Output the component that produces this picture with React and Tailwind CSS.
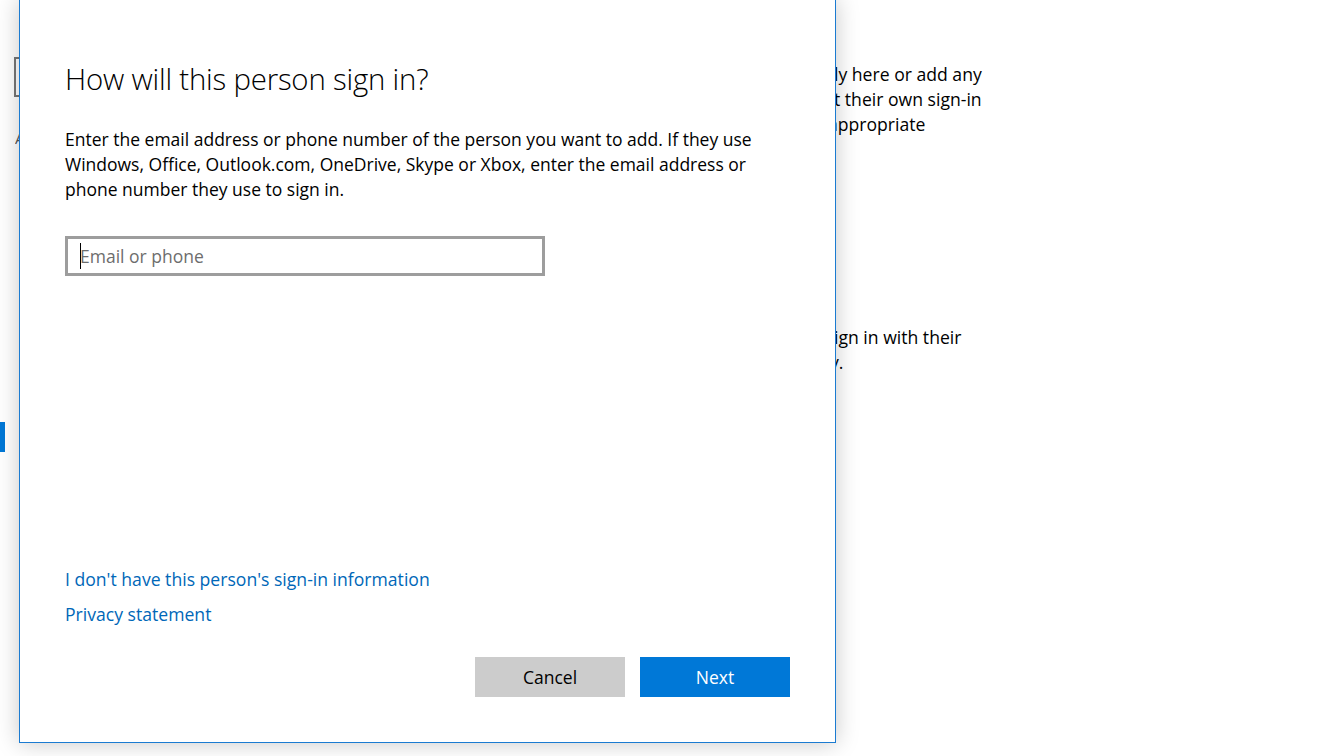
import React from "react";

const bodyLines = [
  "Enter the email address or phone number of the person you want to add. If they use",
  "Windows, Office, Outlook.com, OneDrive, Skype or Xbox, enter the email address or",
  "phone number they use to sign in.",
];

export default function App() {
  return (
    <div className="relative h-[756px] w-[1344px] overflow-hidden bg-white font-['Open_Sans',sans-serif] text-black">
      {/* settings page behind the dialog */}
      <div className="flex h-full">
        <aside className="flex w-[320px] shrink-0 flex-col">
          <div className="ml-[14px] mt-[57px] h-[40px] w-[280px] border-2 border-[#767676]" />
          <div className="ml-[15px] mt-[30px] w-[4px] overflow-hidden text-[15px] text-[#555]">A</div>
          <div className="mt-[272px] h-[30px] w-[5px] bg-[#0078d7]" />
        </aside>
        <main className="flex flex-col pl-[514px] text-[17.6px] leading-[25px]">
          <div className="mt-[62px] whitespace-nowrap">ly here or add any</div>
          <div className="whitespace-nowrap">t their own sign-in</div>
          <div className="-ml-[6px] whitespace-nowrap">appropriate</div>
          <div className="mt-[188px] whitespace-nowrap">ign in with their</div>
          <div className="-ml-[4px] whitespace-nowrap">y.</div>
        </main>
      </div>

      {/* add user dialog */}
      <div className="absolute left-[19px] top-[-1px] flex h-[744px] w-[817px] flex-col border border-[#1b7bd1] bg-white px-[45px] pb-[45px] shadow-[0_0_22px_rgba(0,0,0,0.22)]">
        <h1 className="mt-[59px] text-[29.4px] font-light leading-[40px] tracking-[-0.2px]">How will this person sign in?</h1>
        <p className="mt-[28px] text-[17.5px] leading-[25px]">
          {bodyLines.map((l) => (
            <span key={l} className="block whitespace-nowrap">{l}</span>
          ))}
        </p>
        <div className="mt-[34px] flex h-[40px] w-[480px] items-center border-[3px] border-[#9d9d9d] pl-[12px] text-[17.5px] text-[#6d6d6d]">
          <span className="mr-px h-[26px] w-px shrink-0 bg-black" />
          <span className="-ml-[2px]">Email or phone</span>
        </div>
        <div className="mt-auto flex flex-col gap-[10px] text-[17.6px] leading-[25px] text-[#0067b8]">
          <a>I don't have this person's sign-in information</a>
          <a>Privacy statement</a>
        </div>
        <div className="mt-[30px] flex justify-end gap-[15px] text-[17.5px]">
          <button className="h-[40px] w-[150px] bg-[#cccccc] text-black">Cancel</button>
          <button className="h-[40px] w-[150px] bg-[#0078d7] text-white">Next</button>
        </div>
      </div>
    </div>
  );
}
